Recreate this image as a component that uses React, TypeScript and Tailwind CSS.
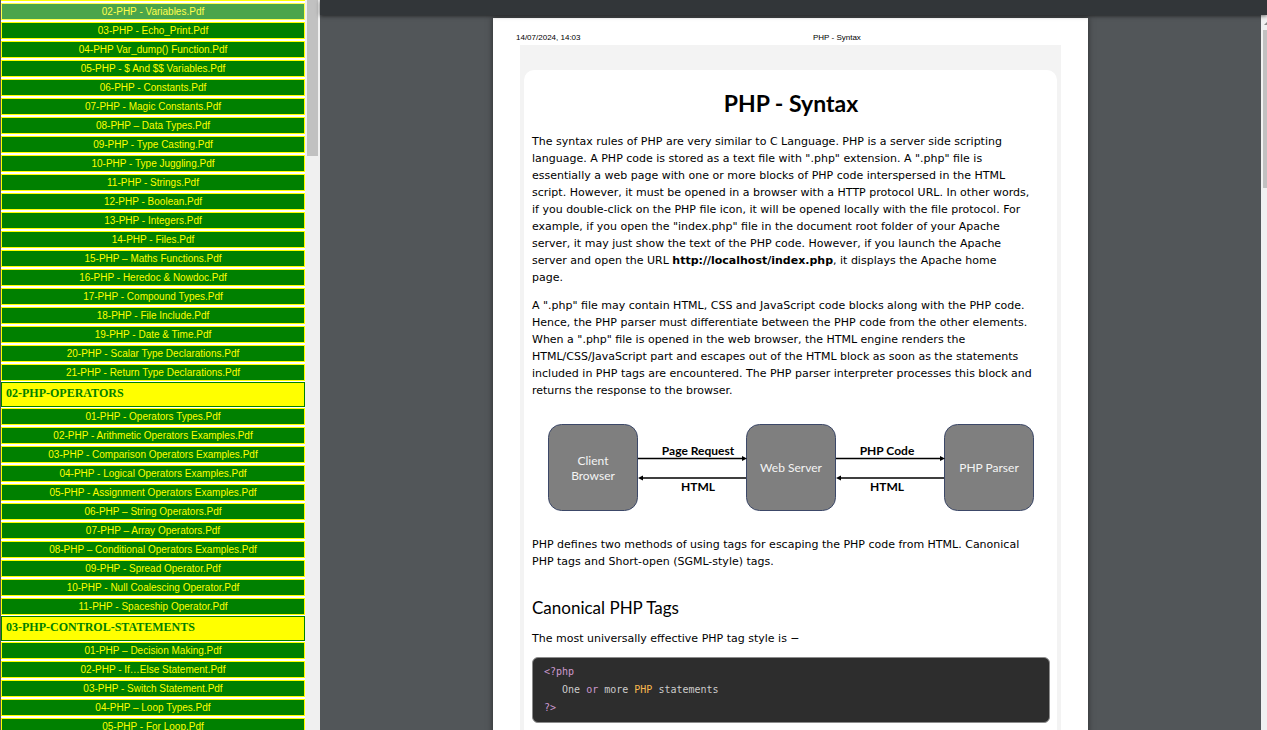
import React from "react";

type Section = { title?: string; items: string[] };

const sections: Section[] = [
  {
    items: [
      "02-PHP - Variables.Pdf",
      "03-PHP - Echo_Print.Pdf",
      "04-PHP Var_dump() Function.Pdf",
      "05-PHP - $ And $$ Variables.Pdf",
      "06-PHP - Constants.Pdf",
      "07-PHP - Magic Constants.Pdf",
      "08-PHP – Data Types.Pdf",
      "09-PHP - Type Casting.Pdf",
      "10-PHP - Type Juggling.Pdf",
      "11-PHP - Strings.Pdf",
      "12-PHP - Boolean.Pdf",
      "13-PHP - Integers.Pdf",
      "14-PHP - Files.Pdf",
      "15-PHP – Maths Functions.Pdf",
      "16-PHP - Heredoc & Nowdoc.Pdf",
      "17-PHP - Compound Types.Pdf",
      "18-PHP - File Include.Pdf",
      "19-PHP - Date & Time.Pdf",
      "20-PHP - Scalar Type Declarations.Pdf",
      "21-PHP - Return Type Declarations.Pdf",
    ],
  },
  {
    title: "02-PHP-OPERATORS",
    items: [
      "01-PHP - Operators Types.Pdf",
      "02-PHP - Arithmetic Operators Examples.Pdf",
      "03-PHP - Comparison Operators Examples.Pdf",
      "04-PHP - Logical Operators Examples.Pdf",
      "05-PHP - Assignment Operators Examples.Pdf",
      "06-PHP – String Operators.Pdf",
      "07-PHP – Array Operators.Pdf",
      "08-PHP – Conditional Operators Examples.Pdf",
      "09-PHP - Spread Operator.Pdf",
      "10-PHP - Null Coalescing Operator.Pdf",
      "11-PHP - Spaceship Operator.Pdf",
    ],
  },
  {
    title: "03-PHP-CONTROL-STATEMENTS",
    items: [
      "01-PHP – Decision Making.Pdf",
      "02-PHP - If…Else Statement.Pdf",
      "03-PHP - Switch Statement.Pdf",
      "04-PHP – Loop Types.Pdf",
      "05-PHP - For Loop.Pdf",
    ],
  },
];

const selected = "02-PHP - Variables.Pdf";

function Sidebar() {
  return (
    <aside className="flex w-80 shrink-0 overflow-hidden border-l border-[#525659] bg-white">
      <nav className="flex-1">
        <div className="h-px bg-[#ffff00]" />
        {sections.map((section, i) => (
          <section key={i}>
            {section.title && (
              <h2 className="mt-px h-[25px] border border-[#008000] bg-[#ffff00] px-1 font-['Liberation_Serif',serif] text-xs leading-[21px] font-bold text-[#008000]">
                {section.title}
              </h2>
            )}
            <div className={section.title ? "flex flex-col gap-0.5 pt-px" : "flex flex-col gap-0.5 pt-0.5"}>
              {section.items.map((item) => (
                <button
                  key={item}
                  type="button"
                  className={
                    item === selected
                      ? "block h-[17px] w-full border border-[#ffff00] bg-[#008000] text-center text-[10px] leading-[15px] text-[#ffff00] opacity-70"
                      : "block h-[17px] w-full border border-[#ffff00] bg-[#008000] text-center text-[10px] leading-[15px] text-[#ffff00]"
                  }
                >
                  {item}
                </button>
              ))}
            </div>
          </section>
        ))}
      </nav>
      <div className="w-[15px] shrink-0 bg-[#f0f0f0] px-0.5">
        <div className="h-[156px] bg-[#c1c1c1]" />
      </div>
    </aside>
  );
}

function Diagram() {
  return (
    <svg
      viewBox="0 0 518 110"
      className="mt-[11px] block w-full font-[Lato,sans-serif]"
      role="img"
      aria-label="Request flow between client browser, web server and PHP parser"
    >
      <g fill="#7f7f7f" stroke="#3c4868">
        <rect x="16.5" y="14.5" width="89" height="86" rx="13" />
        <rect x="214.5" y="14.5" width="89" height="86" rx="13" />
        <rect x="412.5" y="14.5" width="89" height="86" rx="13" />
      </g>
      <g stroke="#000" strokeWidth="1.5">
        <path d="M106 48.5H211M304 48.5H409M214 68H110M412 68H308" />
      </g>
      <path
        d="M210 46l5 2.5-5 2.5zM408 46l5 2.5-5 2.5zM111 65.5l-5 2.5 5 2.5zM309 65.5l-5 2.5 5 2.5z"
        fill="#000"
      />
      <g fill="#f4f4f4" fontSize="12" textAnchor="middle">
        <text x="61" y="55">Client</text>
        <text x="61" y="70">Browser</text>
        <text x="259" y="62">Web Server</text>
        <text x="457" y="62">PHP Parser</text>
      </g>
      <g fill="#000" fontSize="12" fontWeight="700" textAnchor="middle">
        <text x="166" y="45">Page Request</text>
        <text x="166" y="81">HTML</text>
        <text x="355" y="45">PHP Code</text>
        <text x="355" y="81">HTML</text>
      </g>
    </svg>
  );
}

function Page() {
  return (
    <article className="mt-[3px] w-[595px] shrink-0 bg-white px-[27px] text-black shadow-[0_0_6px_rgba(0,0,0,0.5)]">
      <header className="-ml-1 grid h-[27px] grid-cols-[297px_1fr] items-center pt-3 text-[8px] leading-3">
        <span>14/07/2024, 14:03</span>
        <span>PHP - Syntax</span>
      </header>
      <div className="bg-[#f3f3f3] px-1 pt-[25px]">
        <div className="rounded-t-[10px] bg-white pr-[7px] pb-10 pl-2 font-['DejaVu_Sans',sans-serif] text-[11px] leading-[17px]">
          <h1 className="pt-[17px] text-center font-[Lato,sans-serif] text-[23px] leading-8 font-bold">PHP - Syntax</h1>
          <p className="mt-[14px]">
            The syntax rules of PHP are very similar to C Language. PHP is a server side scripting
            <br />
            language. A PHP code is stored as a text file with ".php" extension. A ".php" file is
            <br />
            essentially a web page with one or more blocks of PHP code interspersed in the HTML
            <br />
            script. However, it must be opened in a browser with a HTTP protocol URL. In other words,
            <br />
            if you double-click on the PHP file icon, it will be opened locally with the file protocol. For
            <br />
            example, if you open the "index.php" file in the document root folder of your Apache
            <br />
            server, it may just show the text of the PHP code. However, if you launch the Apache
            <br />
            server and open the URL <b>http://localhost/index.php</b>, it displays the Apache home
            <br />
            page.
          </p>
          <p className="mt-[11px]">
            A ".php" file may contain HTML, CSS and JavaScript code blocks along with the PHP code.
            <br />
            Hence, the PHP parser must differentiate between the PHP code from the other elements.
            <br />
            When a ".php" file is opened in the web browser, the HTML engine renders the
            <br />
            HTML/CSS/JavaScript part and escapes out of the HTML block as soon as the statements
            <br />
            included in PHP tags are encountered. The PHP parser interpreter processes this block and
            <br />
            returns the response to the browser.
          </p>
          <Diagram />
          <p className="mt-4">
            PHP defines two methods of using tags for escaping the PHP code from HTML. Canonical
            <br />
            PHP tags and Short-open (SGML-style) tags.
          </p>
          <h2 className="mt-[26px] font-[Lato,sans-serif] text-[17px] leading-6">Canonical PHP Tags</h2>
          <p className="mt-[10px]">The most universally effective PHP tag style is −</p>
          <pre className="mt-[10px] rounded-md border border-[#8c8c8c] bg-[#2d2d2d] px-[11px] py-[5px] font-['DejaVu_Sans_Mono',monospace] text-[10px] leading-[18px] text-[#cccccc]">
            <span className="text-[#cc99cd]">{"<?php"}</span>
            {"\n   One "}
            <span className="text-[#cc99cd]">or</span>
            {" more "}
            <span className="text-[#f8b84e]">PHP</span>
            {" statements\n"}
            <span className="text-[#cc99cd]">{"?>"}</span>
          </pre>
        </div>
      </div>
    </article>
  );
}

export default function App() {
  return (
    <div className="flex h-screen overflow-hidden font-['Liberation_Sans',Arial,sans-serif]">
      <Sidebar />
      <main className="flex min-w-0 flex-1 flex-col bg-[#525659]">
        <div className="z-10 h-[15px] shrink-0 bg-[#323639] shadow-[0_1px_4px_rgba(0,0,0,0.6)]" />
        <div className="flex min-h-0 flex-1">
          <div className="flex min-w-0 flex-1 items-start justify-center overflow-hidden">
            <Page />
          </div>
          <div className="w-1.5 shrink-0 overflow-hidden bg-[#f1f1f1] pl-0.5">
            <svg viewBox="0 0 4 15" className="h-[15px] w-1">
              <path d="M1 10L5 6v4z" fill="#8a8a8a" />
            </svg>
            <div className="h-[158px] bg-[#c1c1c1]" />
          </div>
        </div>
      </main>
    </div>
  );
}
